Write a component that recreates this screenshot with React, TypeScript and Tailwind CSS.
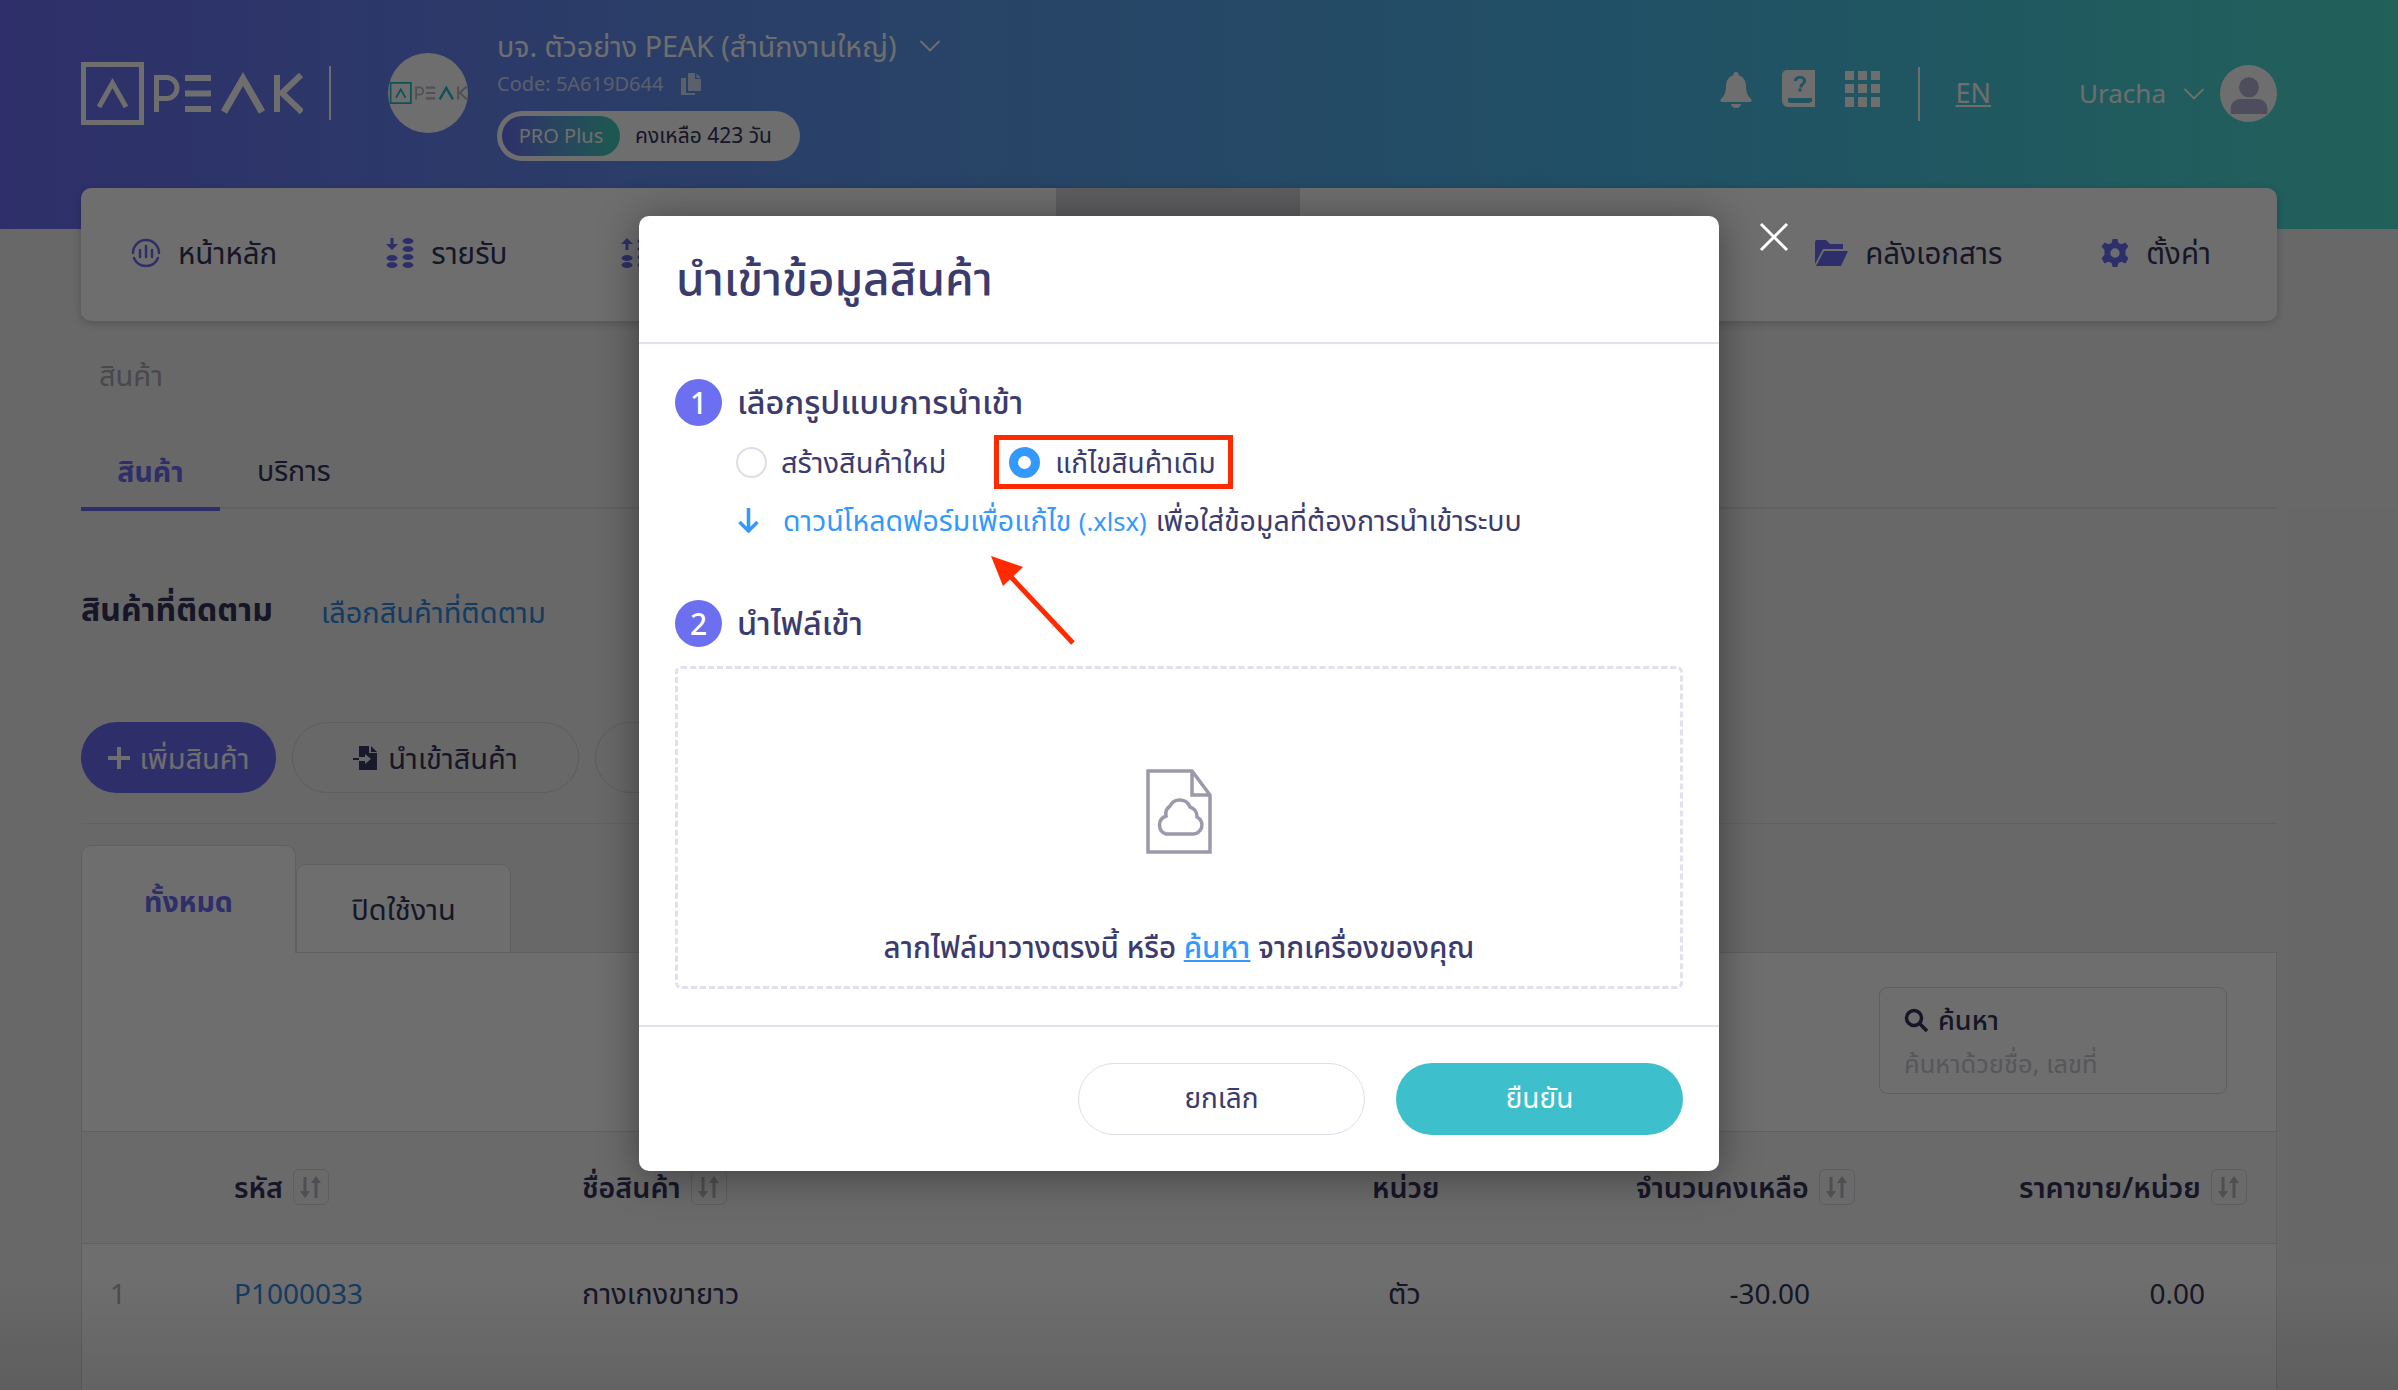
import React from "react";
import { ChevronDown } from "lucide-react";

const FONT = "font-['Noto_Sans','Noto_Sans_Thai','Liberation_Sans',sans-serif]";

function SortIcon() {
  return (
    <span className="ml-[10px] flex h-[36px] w-[36px] items-center justify-center rounded-[6px] border border-[#d9d9e3]">
      <svg viewBox="0 0 21 22" className="h-[22px] w-[21px] text-[#b5b5c0]" fill="currentColor">
        <path d="M3.500 1h3v14h3.500l-5 7-5-7h3.500z" />
        <path d="M16 0l5 7h-3.500v15h-3V7H11z" />
      </svg>
    </span>
  );
}

function PeakLogo({ w, h, box, text, peak }: { w: number; h: number; box: string; text: string; peak: string }) {
  return (
    <svg width={w} height={h} viewBox="0 0 222 63" fill="none">
      <rect x="2.500" y="2.500" width="58" height="58" stroke={box} strokeWidth="5" />
      <path d="M18 45 L31.500 21 L45 45" stroke={box} strokeWidth="5" />
      <path d="M75.500 50V15.500h10a9.500 9.500 0 0 1 0 21h-10" stroke={text} strokeWidth="5" />
      <path d="M104 16h26M104 31.500h26M104 47h26" stroke={text} strokeWidth="6" />
      <path d="M143 50 L162 17 L181 50" stroke={peak} strokeWidth="7" />
      <path d="M196 13v37M220 13 L201 31 L221 50" stroke={text} strokeWidth="6" />
    </svg>
  );
}

function NavItem({ icon, label, className }: { icon: React.ReactNode; label: string; className: string }) {
  return (
    <div className={`flex items-center gap-[17px] ${className}`}>
      {icon}
      <span className="text-[29.5px] leading-none text-[#33335a]">{label}</span>
    </div>
  );
}

function Row({ n, code, name, unit, qty, price }: { n: string; code: string; name: string; unit: string; qty: string; price: string }) {
  return (
    <div className="flex h-[97px] items-center text-[28px] text-[#33335a]">
      <span className="w-[152px] pl-[28px] text-[#b0b0b8]">{n}</span>
      <span className="w-[348px] text-[#2f8be0]">{code}</span>
      <span className="w-[806px] text-[29px]">{name}</span>
      <span className="w-[100px] text-[29px]">{unit}</span>
      <span className="w-[322px] text-right">{qty}</span>
      <span className="w-[395px] text-right">{price}</span>
    </div>
  );
}

export default function App() {
  return (
    <div className={`relative h-[1390px] w-[2398px] overflow-hidden bg-[#f0f0f3] ${FONT}`}>
      <header className="flex h-[229px] items-start bg-gradient-to-r from-[#6c6ef5] via-[#4abcea] via-70% to-[#4fe0d0] pl-[81px] pr-[121px] text-white">
        <div className="mt-[62px]"><PeakLogo w={222} h={63} box="#fff" text="#fff" peak="#fff" /></div>
        <div className="ml-[26px] mt-[66px] h-[54px] w-[2px] bg-white" />
        <div className="ml-[57px] mt-[53px] flex h-[80px] w-[80px] items-center justify-center rounded-full bg-white">
          <PeakLogo w={79} h={22} box="#20c0c8" text="#b8b8c4" peak="#20c0c8" />
        </div>
        <div className="ml-[29px] mt-[24px] flex flex-col items-start">
          <div className="flex h-[44px] items-center gap-[15px] text-[28.6px]">
            <span>บจ. ตัวอย่าง PEAK (สำนักงานใหญ่)</span>
            <ChevronDown className="h-[36px] w-[36px]" strokeWidth={1.2} />
          </div>
          <div className="mt-[2px] flex h-[28px] items-center gap-[18px] text-[20px] text-white/70">
            <span>Code: 5A619D644</span>
            <svg viewBox="0 0 20 22" className="h-[22px] w-[20px]" fill="currentColor">
              <path d="M7 0h7v6h6v12H7z" />
              <path d="M15.500 0.500L20 5h-4.500z" />
              <path d="M0 5h5v15h9v2H0z" />
            </svg>
          </div>
          <div className="mt-[13px] flex h-[50px] w-[303px] items-center rounded-full bg-white p-[5px] text-[20px]">
            <span className="flex h-[40px] w-[118px] items-center justify-center rounded-full bg-gradient-to-r from-[#6c6ef5] to-[#3fd0b8] text-white">PRO Plus</span>
            <span className="ml-[15px] text-[21px] text-[#33335a]">คงเหลือ 423 วัน</span>
          </div>
        </div>
        <div className="ml-auto mt-[65px] flex h-[57px] items-center">
          <svg viewBox="0 0 32 36" className="-mt-[8px] h-[36px] w-[32px]" fill="#fff">
            <path d="M16 0a2.500 2.500 0 0 1 2.500 3.200C23 4.500 26 8.500 26 14c0 7 2 10 5 13 1 1 1 3-1 3H2c-2 0-2-2-1-3 3-3 5-6 5-13 0-5.500 3-9.500 7.500-10.800A2.500 2.500 0 0 1 16 0z" />
            <path d="M11 32h10a5 4 0 0 1-10 0z" />
          </svg>
          <svg viewBox="0 0 33 37" className="-mt-[10px] ml-[30px] h-[37px] w-[33px]" fill="#fff">
            <path fillRule="evenodd" d="M5 0h28v37H6a6 6 0 0 1-6-6V5a5 5 0 0 1 5-5zm1 28v3a2 2 0 0 0 2 2h20v-1h2v-4zM18 6c-4 0-6 2-6 5h3c0-1 1-2.500 3-2.500s3 1 3 2.500c0 2-3.500 2.500-3.500 6.500h3c0-3 3.500-3.500 3.500-6.500S22 6 18 6zm-1.500 12.500v3h3v-3z" />
          </svg>
          <div className="-mt-[10px] ml-[30px] grid h-[36px] w-[36px] grid-cols-3 gap-[4px]">
            {Array.from({ length: 9 }).map((_, i) => <span key={i} className="bg-white" />)}
          </div>
          <div className="ml-[37px] h-[54px] w-[2px] bg-white" />
          <span className="ml-[36px] text-[27px] underline">EN</span>
          <span className="ml-[88px] text-[26px]">Uracha</span>
          <ChevronDown className="ml-[10px] h-[36px] w-[36px]" strokeWidth={1.2} />
          <div className="ml-[8px] flex h-[57px] w-[57px] items-center justify-center rounded-full bg-white">
            <svg viewBox="0 0 24 24" className="h-[40px] w-[40px]" fill="#b3b3d8"><circle cx="12" cy="8" r="6" /><path d="M1 24v-3c0-4 3-6 6-6h10c3 0 6 2 6 6v3z" /></svg>
          </div>
        </div>
      </header>

      <div className="relative ml-[81px] -mt-[41px] flex h-[133px] w-[2196px] rounded-[10px] bg-white shadow-[0_2px_8px_rgba(0,0,0,0.2)]">
        <NavItem className="ml-[50px] mt-[-4px]" label="หน้าหลัก" icon={
          <svg viewBox="0 0 30 30" className="h-[30px] w-[30px]" fill="none" stroke="#6c6ef5" strokeWidth="2.500" strokeLinecap="round"><path d="M2 15a13 13 0 0 1 26 0" /><path d="M3 20a13 13 0 0 0 24 0" /><path d="M9 12v7M15 8v11M21 12v7" /></svg>
        } />
        <NavItem className="ml-[109px] mt-[-4px]" label="รายรับ" icon={
          <svg viewBox="0 0 28 30" className="h-[30px] w-[28px]" fill="#6c6ef5"><path d="M4.500 0h3v6H12l-6 6-6-6h4.500z" /><ellipse cx="6" cy="20" rx="5.500" ry="3" /><ellipse cx="6" cy="27" rx="5.500" ry="3" /><ellipse cx="22" cy="3" rx="5.500" ry="3" /><ellipse cx="22" cy="11" rx="5.500" ry="3" /><ellipse cx="22" cy="19" rx="5.500" ry="3" /><ellipse cx="22" cy="27" rx="5.500" ry="3" /></svg>
        } />
        <NavItem className="ml-[114px] mt-[-4px] w-[435px]" label="รายจ่าย" icon={
          <svg viewBox="0 0 28 30" className="h-[30px] w-[28px]" fill="#6c6ef5"><path d="M6 0l6 6H7.500v6h-3V6H0z" /><ellipse cx="6" cy="20" rx="5.500" ry="3" /><ellipse cx="6" cy="27" rx="5.500" ry="3" /><ellipse cx="22" cy="3" rx="5.500" ry="3" /><ellipse cx="22" cy="11" rx="5.500" ry="3" /><ellipse cx="22" cy="19" rx="5.500" ry="3" /><ellipse cx="22" cy="27" rx="5.500" ry="3" /></svg>
        } />
        <div className="h-[133px] w-[244px] bg-[#d8d8dc]" />
        <div className="ml-auto flex items-center">
          <NavItem className="mt-[-4px]" label="คลังเอกสาร" icon={
            <svg viewBox="0 0 33 30" className="h-[30px] w-[33px]" fill="#6c6ef5"><path d="M0 4a2 2 0 0 1 2-2h9l4 4h13v5H8L0 26z" /><path d="M9 13h24l-7 15H1z" /></svg>
          } />
          <NavItem className="ml-[99px] mr-[66px] mt-[-4px]" label="ตั้งค่า" icon={
            <svg viewBox="0 0 24 24" className="h-[30px] w-[28px]" fill="#6c6ef5"><path fillRule="evenodd" d="M10 0h4l1 3.500 2.500 1.100L21 3l2.500 3.500-2.500 3v4l2.500 3L21 21l-3.500-1.600L15 20.500 14 24h-4l-1-3.500-2.500-1.100L3 21 .5 16.500l2.500-3v-4l-2.500-3L3 3l3.500 1.600L9 3.500zM12 8a4 4 0 1 0 0 8 4 4 0 0 0 0-8z" /></svg>
          } />
        </div>
      </div>

      <div className="ml-[81px] w-[2196px]">
        <div className="mt-[35px] pl-[18px] text-[29px] leading-[38px] text-[#a8a8b5]">สินค้า</div>
        <div className="mt-[42px] flex h-[73px] border-b-2 border-[#e2e2ea] text-[28.5px]">
          <div className="-mt-[1px] flex h-[76px] w-[139px] items-center justify-center border-b-[4px] border-[#6c6ef5] font-bold text-[#6c6ef5]">สินค้า</div>
          <div className="ml-[37px] -mt-[1px] flex h-[71px] items-center text-[#33335a]">บริการ</div>
        </div>
        <div className="mt-[82px] flex items-center">
          <span className="text-[32px] font-bold leading-none text-[#33335a]">สินค้าที่ติดตาม</span>
          <span className="ml-[48px] mt-[6px] text-[29px] leading-none text-[#2f8be0]">เลือกสินค้าที่ติดตาม</span>
        </div>
        <div className="mt-[96px] flex gap-[16px] border-b border-[#e2e2ea] pb-[30px] text-[29px]">
          <div className="flex h-[71px] w-[195px] items-center justify-center gap-[10px] rounded-full bg-[#6c6ef5] text-white">
            <svg viewBox="0 0 22 22" className="h-[22px] w-[22px]" fill="#fff"><path d="M9 0h4v9h9v4h-9v9H9v-9H0V9h9z" /></svg>
            เพิ่มสินค้า
          </div>
          <div className="flex h-[71px] w-[287px] items-center justify-center gap-[10px] rounded-full border border-[#d9d9e3] text-[#33335a]">
            <svg viewBox="0 0 25 24" className="h-[24px] w-[25px]" fill="#3a3a66"><path fillRule="evenodd" d="M6 0h10v7h8v17H6V15h6v3l6-5-6-5v3H6z" /><path d="M18 0l6 6h-6z" /><path d="M0 12h6v2H0z" /></svg>
            นำเข้าสินค้า
          </div>
          <div className="h-[71px] w-[287px] rounded-full border border-[#d9d9e3]" />
        </div>
        <div className="relative -mb-px mt-[21px] flex items-end text-[28.5px]">
          <div className="flex h-[108px] w-[215px] items-start justify-center rounded-t-[10px] border border-b-0 border-[#dedee8] bg-white pt-[34px] font-bold text-[#6c6ef5]">ทั้งหมด</div>
          <div className="flex h-[89px] w-[215px] items-center justify-center rounded-t-[10px] border border-[#dedee8] bg-white text-[29px] text-[#33335a]">ปิดใช้งาน</div>
        </div>
        <div className="h-[500px] border border-[#dedee8] bg-white">
          <div className="flex h-[178px] justify-end pr-[49px] pt-[34px]">
            <div className="h-[107px] w-[348px] rounded-[8px] border border-[#d9d9e3] pl-[24px] pt-[12px]">
              <div className="flex items-center gap-[10px] text-[27px] font-medium text-[#33335a]">
                <svg viewBox="0 0 24 24" className="h-[24px] w-[24px]" fill="none" stroke="#33335a" strokeWidth="3.500"><circle cx="10" cy="10" r="7.500" /><path d="M15.500 15.500L23 23" /></svg>
                ค้นหา
              </div>
              <div className="mt-[3px] text-[25.5px] text-[#c8c8d2]">ค้นหาด้วยชื่อ, เลขที่</div>
            </div>
          </div>
          <div className="flex h-[113px] items-center border-y border-[#dedee8] bg-[#f5f5f8] text-[28.6px] font-semibold text-[#33335a]">
            <div className="ml-[152px] flex w-[348px] items-center">รหัส<SortIcon /></div>
            <div className="flex w-[790px] items-center">ชื่อสินค้า<SortIcon /></div>
            <div className="w-[264px]">หน่วย</div>
            <div className="flex w-[383px] items-center">จำนวนคงเหลือ<SortIcon /></div>
            <div className="flex items-center">ราคาขาย/หน่วย<SortIcon /></div>
          </div>
          <Row n="1" code="P1000033" name="กางเกงขายาว" unit="ตัว" qty="-30.00" price="0.00" />
          <div className="mt-[18px]"><Row n="" code="P1สินค้า" name="สินค้า" unit="" qty="" price="" /></div>
        </div>
      </div>

      <div className="absolute inset-0 bg-black/[0.57]">
        <div className="absolute inset-x-0 bottom-0 h-[110px] bg-gradient-to-b from-transparent to-black/10" />
        <div className="relative ml-[639px] mt-[216px] flex h-[955px] w-[1080px] flex-col rounded-[10px] bg-white text-[#3b3b6d] shadow-[0_4px_40px_rgba(0,0,0,0.4)]">
          <svg viewBox="0 0 30 30" className="absolute left-[1120px] top-[6px] h-[30px] w-[30px]" stroke="#fff" strokeWidth="3"><path d="M2 2l26 26M28 2L2 28" /></svg>
          <div className="flex h-[128px] items-center border-b-2 border-[#e2e2ee] pb-[4px] pl-[37px] text-[46px] font-medium">นำเข้าข้อมูลสินค้า</div>
          <div className="flex-1 px-[36px] pt-[35px]">
            <div className="flex h-[47px] items-center gap-[15px] text-[32.5px] font-medium">
              <span className="flex h-[47px] w-[47px] items-center justify-center rounded-full bg-[#6c6fef] text-[30px] text-white">1</span>
              เลือกรูปแบบการนำเข้า
            </div>
            <div className="mt-[9px] flex h-[54px] items-center pl-[61px] text-[29px]">
              <span className="h-[31px] w-[31px] rounded-full border-2 border-[#dedeea]" />
              <span className="ml-[14px]">สร้างสินค้าใหม่</span>
              <div className="ml-[48px] flex h-[54px] w-[239px] items-center border-[5px] border-[#ff2a00] pl-[10px]">
                <span className="h-[31px] w-[31px] rounded-full border-[9px] border-[#3399ff]" />
                <span className="ml-[15px] whitespace-nowrap text-[28px]">แก้ไขสินค้าเดิม</span>
              </div>
            </div>
            <div className="mt-[11px] flex h-[40px] items-center pl-[61px] text-[28.5px]">
              <svg viewBox="0 0 24 26" className="h-[26px] w-[25px]" fill="none" stroke="#3399ff" strokeWidth="3.500"><path d="M12 1v23M3 15l9 9 9-9" /></svg>
              <span className="ml-[22px] text-[#3399ff]">ดาวน์โหลดฟอร์มเพื่อแก้ไข <span className="text-[25.5px]">(.xlsx)</span></span>
              <span className="ml-[9px]">เพื่อใส่ข้อมูลที่ต้องการนำเข้าระบบ</span>
            </div>
            <div className="mt-[60px] flex h-[47px] items-center gap-[15px] text-[32.5px] font-medium">
              <span className="flex h-[47px] w-[47px] items-center justify-center rounded-full bg-[#6c6fef] text-[30px] text-white">2</span>
              นำไฟล์เข้า
            </div>
            <div className="mt-[19px] flex h-[323px] flex-col items-center rounded-[6px] border-[3px] border-dashed border-[#e0e0ee] pt-[100px]">
              <svg viewBox="0 0 66 85" className="h-[85px] w-[66px]" fill="none" stroke="#9a9aac" strokeWidth="3.500"><path d="M2 2h44l18 24v57H2zM46 2v24h18" /><path d="M20 65h26a9 9 0 0 0 5-17 10 10 0 0 0-7-10 11 11 0 0 0-20-1 10 10 0 0 0-4 10 9.500 9.500 0 0 0 0 18z" /></svg>
              <div className="mt-[71px] text-[29.5px] font-medium">ลากไฟล์มาวางตรงนี้ หรือ <span className="text-[#3399ff] underline">ค้นหา</span> จากเครื่องของคุณ</div>
            </div>
          </div>
          <div className="flex h-[146px] items-center justify-end gap-[31px] border-t-2 border-[#e2e2ee] pr-[36px] text-[28px]">
            <div className="flex h-[72px] w-[287px] items-center justify-center rounded-full border border-[#dedeea] pb-[4px] leading-none">ยกเลิก</div>
            <div className="flex h-[72px] w-[287px] items-center justify-center rounded-full bg-[#3ebfcc] pb-[4px] leading-none text-white">ยืนยัน</div>
          </div>
          <svg viewBox="0 0 90 95" className="absolute left-[350px] top-[337px] h-[95px] w-[90px]"><path d="M84 90L22 24" stroke="#ff2a00" strokeWidth="5" /><path d="M2 3l32 11-20 19z" fill="#ff2a00" /></svg>
        </div>
      </div>
    </div>
  );
}
